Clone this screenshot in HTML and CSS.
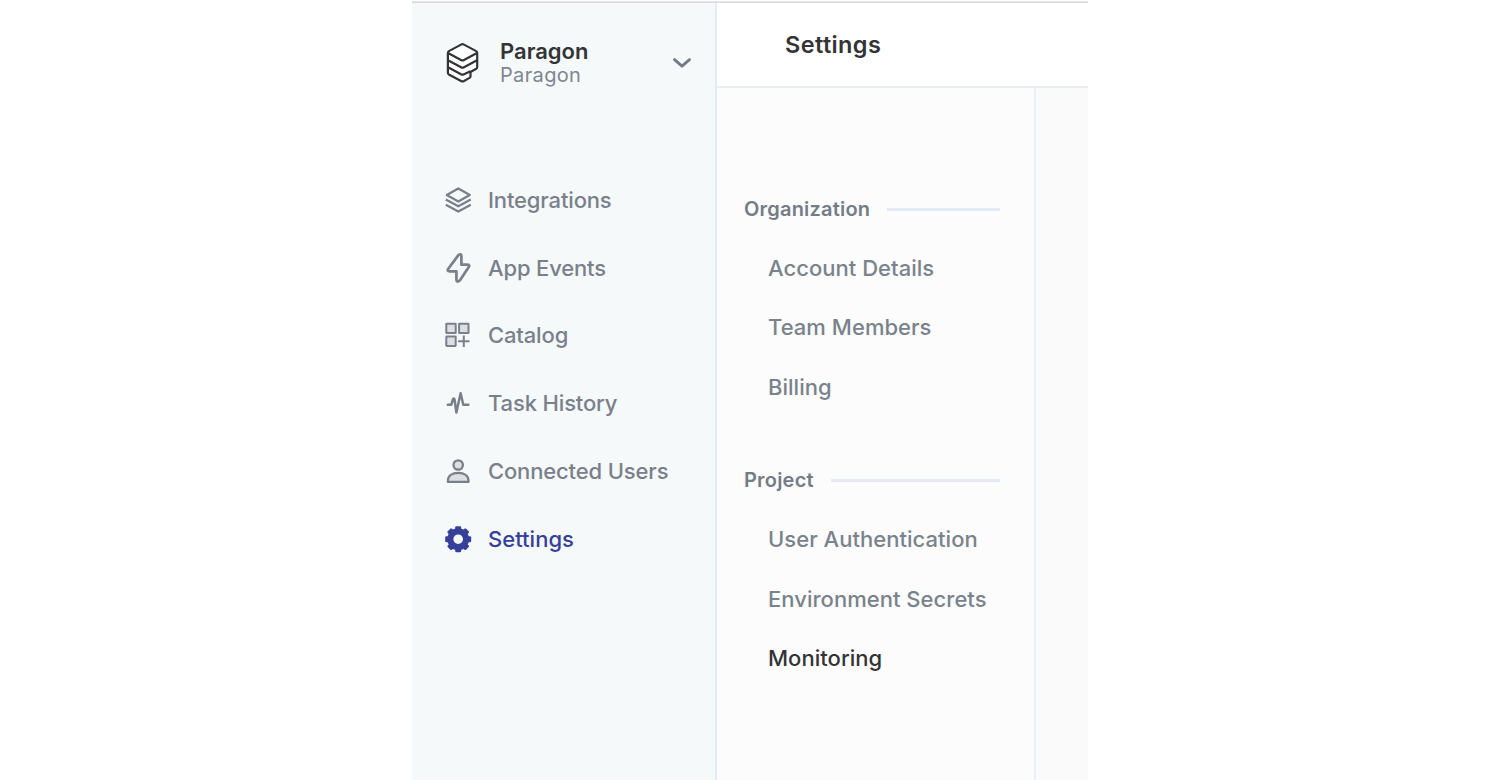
FILE: index.html
```html
<!DOCTYPE html>
<html lang="en">
<head>
<meta charset="utf-8">
<title>Settings</title>
<link rel="stylesheet" href="styles.css">
</head>
<body>
<div class="app">
  <aside class="sidebar">
    <div class="project">
      <svg class="logo" width="34" height="42" viewBox="0 0 34 42" fill="none" stroke="#333436" stroke-width="2.2" stroke-linejoin="round">
        <path fill="#fff" d="M15 2.6Q16.5 1.8 18 2.6L30.2 9.1Q31.2 9.7 31.2 10.9V25Q31.2 26.2 30.2 26.8L24.5 30V34.2Q24.5 35.3 23.5 35.9L18 39Q16.5 39.8 15 39L2.9 32.5Q1.9 31.9 1.9 30.8V10.9Q1.9 9.7 2.9 9.1Z"/>
        <path d="M2 11L15 18Q16.5 18.8 18 18L31 11M2 18.3L15 25.3Q16.5 26.1 18 25.3L31 18.3M2 25.3L15 32.3Q16.5 33.1 18 32.3L24.5 29.2"/>
      </svg>
      <div class="names"><span class="name">Paragon</span><span class="org">Paragon</span></div>
      <svg class="chevron" width="20" height="14" viewBox="0 0 20 14" fill="none" stroke="#747b88" stroke-width="2.8" stroke-linecap="round" stroke-linejoin="round"><path d="M2.5 3.6L10 10.1L17.5 3.6"/></svg>
    </div>
    <nav class="nav">
      <a class="item"><svg class="icon" viewBox="0 0 30 32" fill="none" stroke="#7a808b" stroke-width="2.3" stroke-linejoin="round"><path d="M15.3 4.5L26.8 11L15.3 17.5L3.8 11Z"/><path d="M2.8 15.6L15.3 22.3L27.8 15.6M2.8 20.8L15.3 27.5L27.8 20.8"/></svg><span>Integrations</span></a>
      <a class="item"><svg class="icon" viewBox="0 0 30 32" fill="none" stroke="#7a808b" stroke-width="2.7" stroke-linejoin="round"><path d="M15.4 3.1Q18.4 1 18.4 4.2V12.7H24.2Q27.4 12.7 25.6 15.2L17 28.2Q13.4 31.2 13.4 27.5V19.3H6.6Q3.6 19.3 5.3 16.8Z"/></svg><span>App Events</span></a>
      <a class="item"><svg class="icon" viewBox="0 0 30 32" fill="#dddfe1" stroke="#7a808b" stroke-width="2"><rect x="3.3" y="4.7" width="9.4" height="9.4" rx=".4"/><rect x="16.1" y="4.7" width="9.4" height="9.4" rx=".4"/><rect x="3.3" y="17.5" width="9.4" height="9.4" rx=".4"/><path d="M20.8 16.6V28M15.1 22.3H26.5"/></svg><span>Catalog</span></a>
      <a class="item"><svg class="icon" viewBox="0 0 30 32" fill="none" stroke="#7a808b" stroke-width="2.5" stroke-linecap="round" stroke-linejoin="round"><path d="M4.8 17.8H8.2L10.1 12Q10.9 10.9 11.5 12.3L13.4 25.6L17.6 6.2L20.3 17.8H25.4"/></svg><span>Task History</span></a>
      <a class="item"><svg class="icon" viewBox="0 0 30 32" fill="#dddfe1" stroke="#7a808b" stroke-width="2.3" stroke-linejoin="round"><circle cx="15.2" cy="10" r="4.7"/><path d="M4.9 26.9V26C4.9 20.4 9.4 17.9 15.2 17.9S25.5 20.4 25.5 26V26.9Z"/></svg><span>Connected Users</span></a>
      <a class="item active"><svg class="icon" viewBox="0 0 30 32" fill="#354099"><g transform="translate(15.2 16.2)"><g id="teeth"><rect x="-3" y="-13" width="6" height="26" rx="1.2"/><rect x="-13" y="-3" width="26" height="6" rx="1.2"/></g><use href="#teeth" transform="rotate(45)"/><circle r="10.9"/><circle r="4.8" fill="#f5f9fa"/></g></svg><span>Settings</span></a>
    </nav>
  </aside>
  <main class="main">
    <header class="header"><h1 class="title">Settings</h1></header>
    <div class="body">
      <div class="menu">
        <section class="group">
          <h2 class="heading">Organization</h2>
          <a class="link">Account Details</a>
          <a class="link">Team Members</a>
          <a class="link">Billing</a>
        </section>
        <section class="group">
          <h2 class="heading">Project</h2>
          <a class="link">User Authentication</a>
          <a class="link">Environment Secrets</a>
          <a class="link current">Monitoring</a>
        </section>
      </div>
      <div class="content"></div>
    </div>
  </main>
</div>
</body>
</html>
```
FILE: styles.css
```css
* { box-sizing: border-box; }
body { margin: 0; background: #fff; font-family: Inter, sans-serif; overflow: hidden; }
.app { width: 676px; height: 780px; margin: 0 auto; padding-top: 3px; display: flex; background: linear-gradient(#fff 0 1px, #e6e6e9 1px 2px, #d9dadd 2px 3px, #fff 3px); }
.sidebar { width: 305px; background: #f5f9fa; border-right: 2px solid #e4eaf7; }
.project { display: flex; align-items: center; height: 120px; padding: 0 23px 0 34px; }
.logo { flex: none; }
.names { display: flex; flex-direction: column; margin-left: 20px; }
.name { font-size: 22px; line-height: 25px; font-weight: 600; color: #333436; }
.org { margin-top: -1px; font-size: 20px; line-height: 24px; color: #7f8591; letter-spacing: .35px; }
.chevron { margin-left: auto; }
.nav { padding: 43px 0 0 31px; display: flex; flex-direction: column; }
.item { height: 67.8px; display: flex; align-items: center; gap: 15px; font-size: 22px; font-weight: 450; color: #7a808b; letter-spacing: -.15px; white-space: nowrap; }
.active { color: #354099; letter-spacing: .03px; }
.icon { width: 30px; height: 32px; flex: none; }
.main { flex: 1; display: flex; flex-direction: column; }
.header { height: 85px; border-bottom: 2px solid #eaedf0; padding: 0 0 0 68px; display: flex; align-items: center; background: #fff; }
.title { margin: 0; font-size: 23.5px; line-height: 30px; font-weight: 600; color: #333436; letter-spacing: .38px; }
.body { flex: 1; display: flex; }
.menu { width: 319px; border-right: 2px solid #ebeff3; background: #fcfcfc; padding: 91.5px 34px 0 27px; }
.content { flex: 1; background: #fafafa; }
.group { height: 271.2px; }
.heading { margin: 0; height: 59.4px; display: flex; align-items: center; gap: 17px; font-size: 20px; font-weight: 600; color: #747c87; letter-spacing: .2px; }
.heading::after { content: ""; flex: 1; height: 3px; background: #e3e9f7; }
.link { height: 59.4px; display: flex; align-items: center; padding: 0 0 1px 24px; font-size: 22px; font-weight: 450; color: #7a828c; letter-spacing: .03px; white-space: nowrap; }
.current { color: #333436; }
```
